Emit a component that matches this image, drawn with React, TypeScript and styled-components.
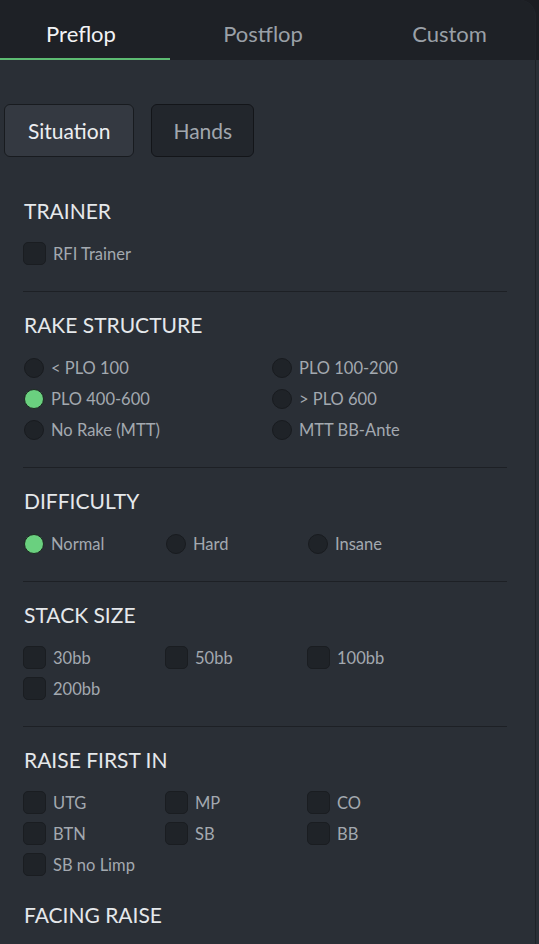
import React from "react";
import styled, { createGlobalStyle } from "styled-components";

const Global = createGlobalStyle`
  html, body {
    margin: 0;
    padding: 0;
  }
  body {
    background: linear-gradient(#1b1d22 0 60px, #2a2f36 60px);
    font-family: Lato, "Open Sans", "Liberation Sans", sans-serif;
    -webkit-font-smoothing: antialiased;
  }
  * { box-sizing: border-box; }
`;

const Panel = styled.div`
  width: 536px;
  border-top-right-radius: 16px;
  overflow: hidden;
  background: #2a2f36;
  border-right: 1px solid #1f2328;
`;

const TabBar = styled.div`
  display: grid;
  grid-template-columns: 162px 202px 1fr;
  height: 60px;
  background: #1e2126;
`;

const Tab = styled.div<{ $active?: boolean }>`
  position: relative;
  display: flex;
  align-items: center;
  justify-content: center;
  padding-top: 6px;
  font-size: 22px;
  color: ${(p) => (p.$active ? "#f2f3f5" : "#9aa0a7")};
  &::after {
    content: "";
    display: ${(p) => (p.$active ? "block" : "none")};
    position: absolute;
    left: 0;
    bottom: 0;
    width: 170px;
    height: 2px;
    background: #5dbb72;
  }
`;

const ModeBar = styled.div`
  display: flex;
  gap: 17px;
  padding: 44px 4px 21px;
`;

const ModeButton = styled.div<{ $active?: boolean }>`
  height: 53px;
  display: flex;
  align-items: center;
  padding: 0 ${(p) => (p.$active ? "23px" : "21px")} 1px;
  border-radius: 6px;
  font-size: 21px;
  background: ${(p) => (p.$active ? "#343941" : "#22262c")};
  border: 1px solid ${(p) => (p.$active ? "#181b1f" : "#131519")};
  color: ${(p) => (p.$active ? "#eceef0" : "#a1a7ae")};
`;

const Section = styled.section<{ $divider?: boolean }>`
  margin: 0 28px 0 23px;
  padding: 21px 0 ${(p) => (p.$divider === false ? "6px" : "26px")};
  border-bottom: ${(p) => (p.$divider === false ? "none" : "1px solid #1d2025")};
`;

const Heading = styled.h2`
  margin: 0 0 19px 1px;
  font-size: 21px;
  line-height: 24px;
  font-weight: 400;
  color: #e5e8eb;
`;

const Options = styled.div<{ $cols: number; $col: number }>`
  display: grid;
  grid-template-columns: repeat(${(p) => p.$cols}, ${(p) => p.$col}px);
  row-gap: 8px;
`;

const Option = styled.label`
  display: flex;
  align-items: center;
  gap: 7px;
  height: 23px;
  font-size: 16.5px;
  color: #a3a9b0;
  white-space: nowrap;
`;

const Box = styled.span`
  width: 23px;
  height: 23px;
  flex: none;
  border-radius: 5px;
  background: #1f2328;
  border: 1px solid #1a1d21;
`;

const Dot = styled.span<{ $on?: boolean }>`
  width: 20px;
  height: 20px;
  flex: none;
  margin-left: 1px;
  border-radius: 50%;
  background: ${(p) => (p.$on ? "#6ad07f" : "#1f2328")};
  border: 1px solid ${(p) => (p.$on ? "#1c2a21" : "#181b1f")};
`;

type Item = { label: string; on?: boolean };

const CheckGroup = ({ items, cols, col }: { items: Item[]; cols: number; col: number }) => (
  <Options $cols={cols} $col={col}>
    {items.map((it) => (
      <Option key={it.label}>
        <Box />
        {it.label}
      </Option>
    ))}
  </Options>
);

const RadioGroup = ({ items, cols, col }: { items: Item[]; cols: number; col: number }) => (
  <Options $cols={cols} $col={col}>
    {items.map((it) => (
      <Option key={it.label}>
        <Dot $on={it.on} />
        {it.label}
      </Option>
    ))}
  </Options>
);

export default function App() {
  return (
    <>
      <Global />
      <Panel>
        <TabBar>
          <Tab $active>Preflop</Tab>
          <Tab>Postflop</Tab>
          <Tab>Custom</Tab>
        </TabBar>
        <ModeBar>
          <ModeButton $active>Situation</ModeButton>
          <ModeButton>Hands</ModeButton>
        </ModeBar>

        <Section>
          <Heading>TRAINER</Heading>
          <CheckGroup cols={2} col={248} items={[{ label: "RFI Trainer" }]} />
        </Section>

        <Section>
          <Heading>RAKE STRUCTURE</Heading>
          <RadioGroup
            cols={2}
            col={248}
            items={[
              { label: "< PLO 100" },
              { label: "PLO 100-200" },
              { label: "PLO 400-600", on: true },
              { label: "> PLO 600" },
              { label: "No Rake (MTT)" },
              { label: "MTT BB-Ante" },
            ]}
          />
        </Section>

        <Section>
          <Heading>DIFFICULTY</Heading>
          <RadioGroup
            cols={3}
            col={142}
            items={[{ label: "Normal", on: true }, { label: "Hard" }, { label: "Insane" }]}
          />
        </Section>

        <Section>
          <Heading>STACK SIZE</Heading>
          <CheckGroup
            cols={3}
            col={142}
            items={[{ label: "30bb" }, { label: "50bb" }, { label: "100bb" }, { label: "200bb" }]}
          />
        </Section>

        <Section $divider={false}>
          <Heading>RAISE FIRST IN</Heading>
          <CheckGroup
            cols={3}
            col={142}
            items={[
              { label: "UTG" },
              { label: "MP" },
              { label: "CO" },
              { label: "BTN" },
              { label: "SB" },
              { label: "BB" },
              { label: "SB no Limp" },
            ]}
          />
        </Section>

        <Section>
          <Heading>FACING RAISE</Heading>
          <RadioGroup
            cols={2}
            col={248}
            items={[{ label: "vs RFI" }, { label: "vs 3-Bet" }]}
          />
        </Section>
      </Panel>
    </>
  );
}
